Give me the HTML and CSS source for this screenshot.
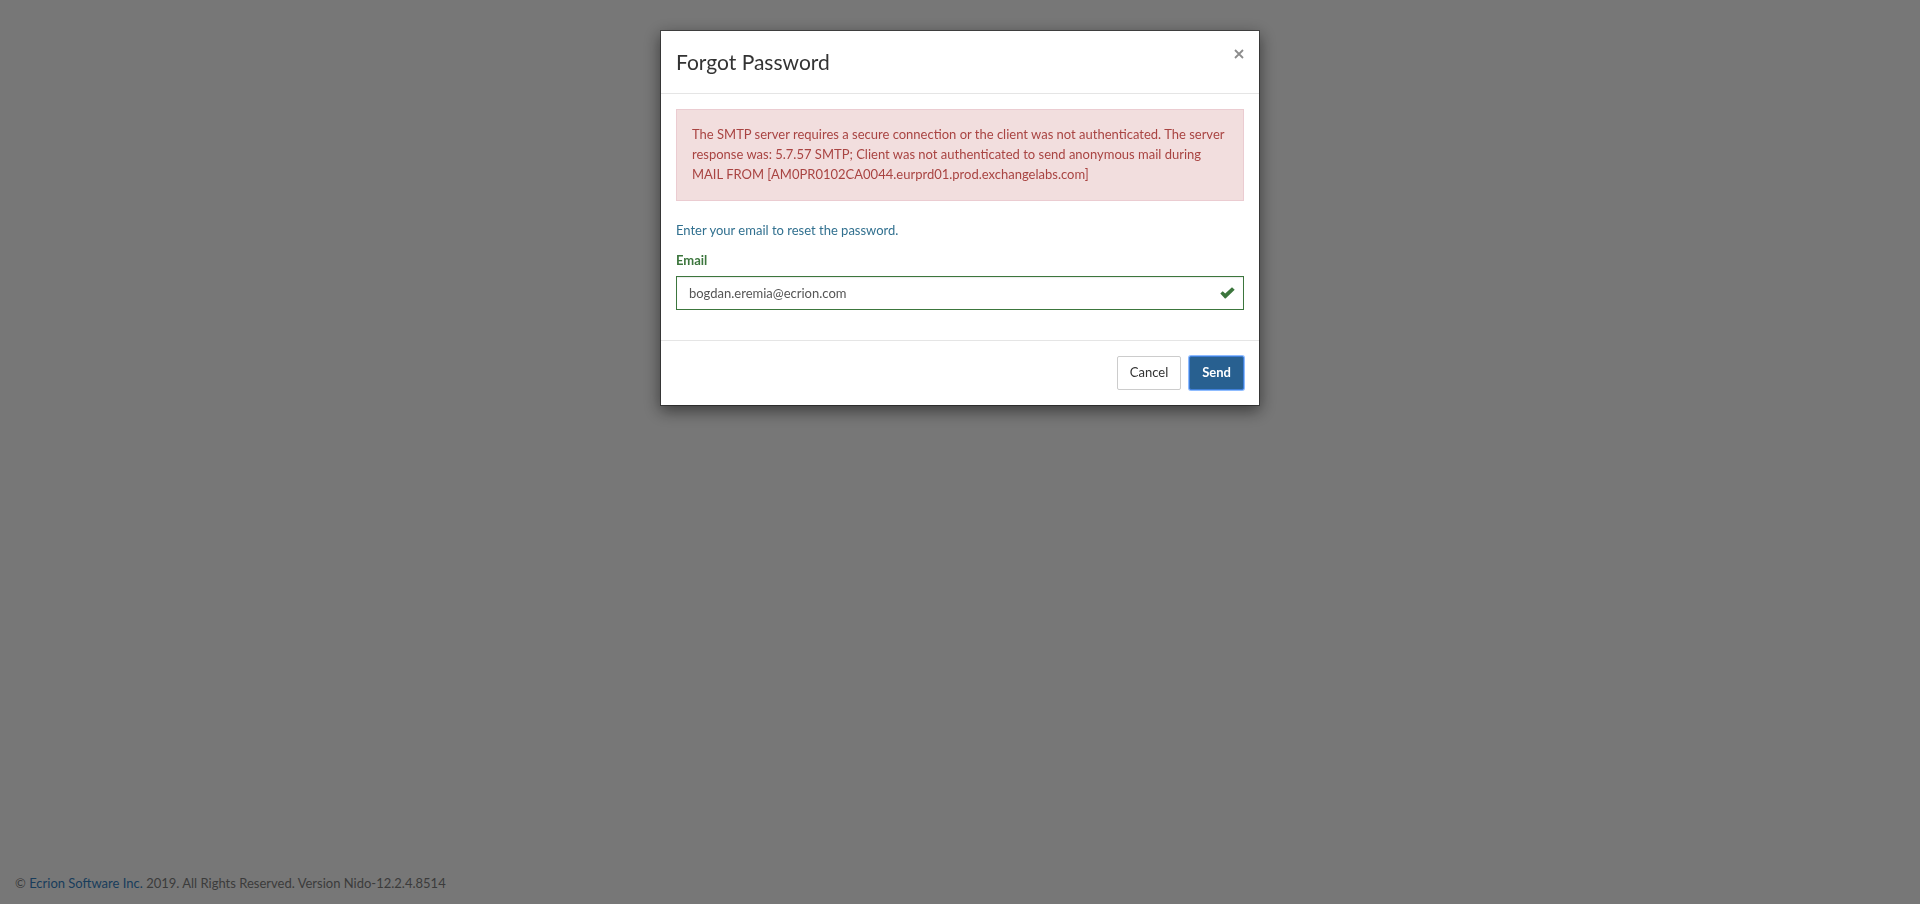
FILE: index.html
```html
<!DOCTYPE html>
<html lang="en">
<head>
<meta charset="utf-8">
<title>Forgot Password</title>
<link rel="stylesheet" href="styles.css">
</head>
<body>
<div class="page">
  <footer class="page-footer">© <a href="#">Ecrion Software Inc.</a> 2019. All Rights Reserved. Version Nido-12.2.4.8514</footer>
</div>
<div class="backdrop">
  <form class="modal" role="dialog" aria-labelledby="title">
    <header class="modal-header">
      <h1 class="modal-title" id="title">Forgot Password</h1>
      <button class="close" type="button" aria-label="Close">
        <svg width="10" height="10" viewBox="0 0 10 10" aria-hidden="true"><path d="M1 1l8 8M9 1l-8 8" fill="none" stroke="#8c8c8c" stroke-width="1.8"/></svg>
      </button>
    </header>
    <div class="modal-body">
      <div class="alert" role="alert">The SMTP server requires a secure connection or the client was not authenticated. The server response was: 5.7.57 SMTP; Client was not authenticated to send anonymous mail during MAIL FROM [AM0PR0102CA0044.eurprd01.prod.exchangelabs.com]</div>
      <p class="hint">Enter your email to reset the password.</p>
      <label class="label" for="email">Email</label>
      <div class="field">
        <input class="input" id="email" type="email" value="bogdan.eremia@ecrion.com">
        <svg class="check" width="15" height="12" viewBox="0 0 15 12" aria-hidden="true"><path d="M0.3 6.6L2.7 4.2L5.2 6.6L12 0.3L14.7 2.8L5.6 11.6H4.9Z" fill="#3c763d"/></svg>
      </div>
    </div>
    <footer class="modal-footer">
      <button class="btn" type="button">Cancel</button>
      <button class="btn btn-primary" type="submit">Send</button>
    </footer>
  </form>
</div>
</body>
</html>
```
FILE: styles.css
```css
* {
  box-sizing: border-box;
}

body {
  margin: 0;
  font: 13px/20px Lato, "Open Sans", sans-serif;
  color: #333;
  background: #efefef;
}

.page {
  display: flex;
  flex-direction: column;
  justify-content: flex-end;
  min-height: 100vh;
}

.page-footer {
  padding: 10px 15px 11px;
  color: #777;
}

.page-footer a {
  color: #337ab7;
  text-decoration: none;
}

.backdrop {
  position: fixed;
  inset: 0;
  padding: 30px 10px;
  overflow: auto;
  background: rgba(0, 0, 0, 0.5);
}

.modal {
  max-width: 600px;
  margin: 0 auto;
  background: #fff;
  background-clip: padding-box;
  border: 1px solid rgba(0, 0, 0, 0.4);
  box-shadow: 0 5px 15px rgba(0, 0, 0, 0.5);
}

.modal-header {
  display: flex;
  justify-content: space-between;
  align-items: flex-start;
  padding: 15px;
  border-bottom: 1px solid #e5e5e5;
}

.modal-title {
  margin: 0;
  font-size: 21px;
  font-weight: 400;
  line-height: 32px;
}

.close {
  display: flex;
  padding: 3px 0;
  border: 0;
  background: none;
}

.modal-body {
  padding: 15px 15px 30px;
}

.alert {
  margin-bottom: 19px;
  padding: 14px 15px 16px;
  color: #a94442;
  background: #f2dede;
  border: 1px solid #ebccd1;
}

.hint {
  margin: 0 0 10px;
  color: #31708f;
}

.label {
  display: block;
  margin-bottom: 6px;
  font-weight: 700;
  color: #3c763d;
}

.field {
  position: relative;
}

.input {
  display: block;
  width: 100%;
  height: 34px;
  padding: 6px 40px 6px 12px;
  font: inherit;
  color: #555;
  background: #fff;
  border: 1px solid #3c763d;
  box-shadow: inset 0 1px 1px rgba(0, 0, 0, 0.08);
}

.check {
  position: absolute;
  top: 11px;
  right: 9px;
}

.modal-footer {
  display: flex;
  justify-content: flex-end;
  gap: 8px;
  padding: 15px;
  border-top: 1px solid #e5e5e5;
}

.btn {
  padding: 5px 12px 7px;
  font: inherit;
  color: #333;
  background: #fff;
  border: 1px solid #ccc;
  border-radius: 2px;
}

.btn-primary {
  font-weight: 700;
  color: #fff;
  background: #286090;
  border-color: #3f7fd8;
  box-shadow: 0 0 0 1px #8fbcff;
}
```
